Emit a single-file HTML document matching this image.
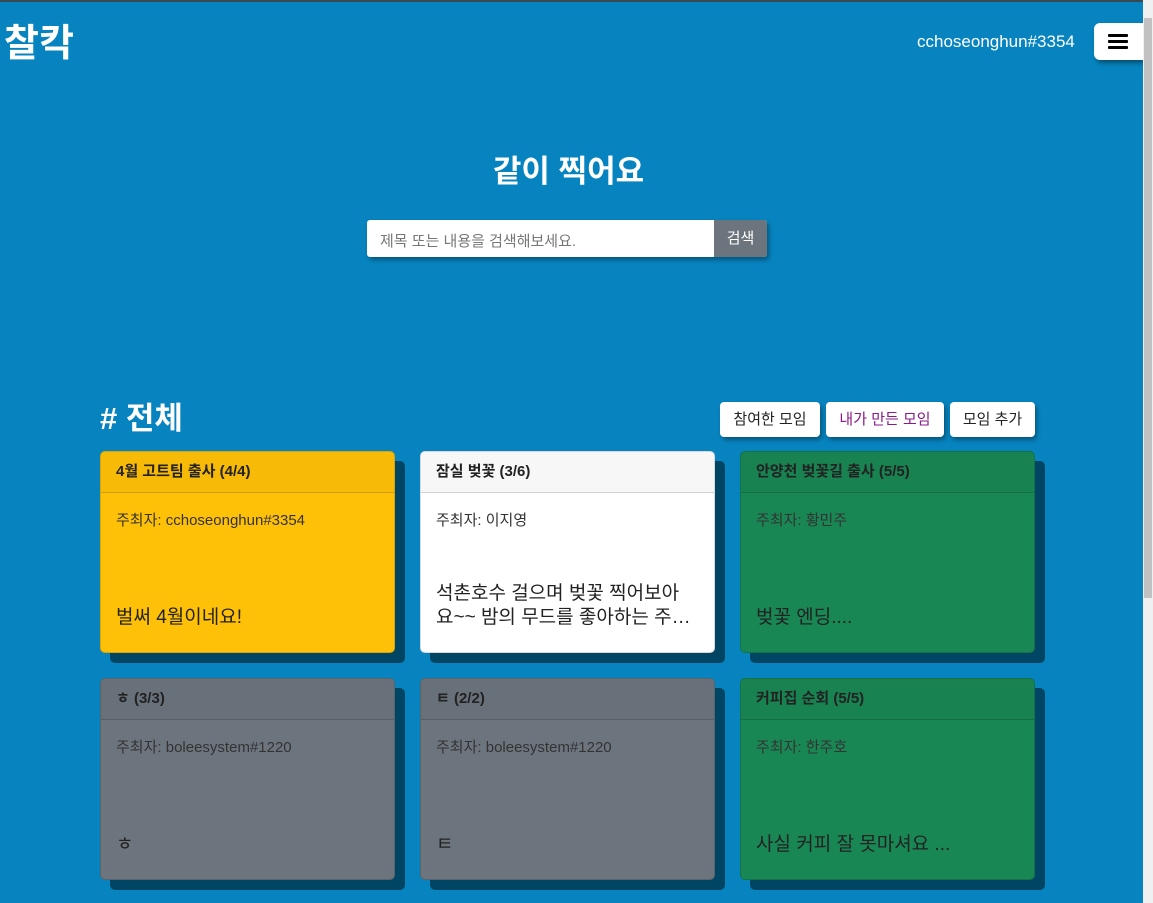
<!DOCTYPE html>
<html><head><meta charset="utf-8"><style>
*{box-sizing:border-box;margin:0;padding:0}
body{width:1153px;height:903px;overflow:hidden;background:#0784bf;font-family:"Liberation Sans","Noto Sans CJK KR",sans-serif;position:relative}
.top{position:absolute;left:0;top:0;width:1153px;height:2px;background:#3a4a55}
.sb{position:absolute;right:0;top:0;width:10px;height:903px;background:#f0f0f0}
.sb div{position:absolute;left:1px;top:18px;width:8px;height:580px;background:#c1c1c1}
.logo{position:absolute;left:4px;top:12px;color:#fff;font-size:38px;font-weight:bold}
.user{position:absolute;left:917px;top:32px;color:#fff;font-size:17px}
.menu{position:absolute;left:1094px;top:23px;width:49px;height:37px;background:#fff;border-radius:6px 0 0 6px;box-shadow:2px 3px 5px rgba(0,0,0,.4)}
.menu i{position:absolute;left:14px;width:20px;height:3px;background:#000;border-radius:1px}
h1{position:absolute;left:0;width:1137px;text-align:center;top:146px;color:#fff;font-size:31px}
.search{position:absolute;left:367px;top:220px;width:400px;height:37px;background:#fff;border-radius:3px;box-shadow:2px 3px 5px rgba(0,0,0,.35)}
.search span{position:absolute;left:13px;top:10px;font-size:15px;color:#777}
.search b{position:absolute;right:0;top:0;width:53px;height:37px;background:#6c757d;color:#fff;font-size:15px;font-weight:normal;text-align:center;line-height:37px;border-radius:0 3px 3px 0}
h2{position:absolute;left:100px;top:393px;color:#fff;font-size:31px}
.btn{position:absolute;top:402px;height:35px;background:#fff;border-radius:4px;font-size:15px;line-height:35px;text-align:center;box-shadow:2px 3px 5px rgba(0,0,0,.35);color:#222}
.card{position:absolute;width:295px;height:202px;border-radius:5px;box-shadow:10px 10px 0 #004563;border:1px solid rgba(0,0,0,.15);overflow:hidden}
.card .h{height:41px;border-bottom:1px solid rgba(0,0,0,.15);padding:8px 15px;font-size:15px;font-weight:bold;color:#222;background:rgba(0,0,0,.03)}
.card .o{position:absolute;left:15px;top:57px;font-size:15px;color:#333}
.card .t{position:absolute;left:15px;bottom:22px;right:18px;font-size:19px;color:#222;line-height:24px}
.y{background:#ffc107}.w{background:#fff}.g{background:#198754}.gr{background:#6c757d}
</style></head><body>
<div class="top"></div>
<div class="logo">찰칵</div>
<div class="user">cchoseonghun#3354</div>
<div class="menu"><i style="top:11px"></i><i style="top:17px"></i><i style="top:23px"></i></div>
<h1>같이 찍어요</h1>
<div class="search"><span>제목 또는 내용을 검색해보세요.</span><b>검색</b></div>
<h2># 전체</h2>
<div class="btn" style="left:720px;width:100px">참여한 모임</div>
<div class="btn" style="left:826px;width:118px;color:#8a1a8a">내가 만든 모임</div>
<div class="btn" style="left:950px;width:85px">모임 추가</div>

<div class="card y" style="left:100px;top:451px"><div class="h">4월 고트팀 출사 (4/4)</div><div class="o">주최자: cchoseonghun#3354</div><div class="t">벌써 4월이네요!</div></div>
<div class="card w" style="left:420px;top:451px"><div class="h" style="background:#f7f7f7">잠실 벚꽃 (3/6)</div><div class="o">주최자: 이지영</div><div class="t" style="height:48px;overflow:hidden">석촌호수 걸으며 벚꽃 찍어보아<br>요~~ 밤의 무드를 좋아하는 주…</div></div>
<div class="card g" style="left:740px;top:451px"><div class="h">안양천 벚꽃길 출사 (5/5)</div><div class="o">주최자: 황민주</div><div class="t">벚꽃 엔딩....</div></div>
<div class="card gr" style="left:100px;top:678px"><div class="h">ㅎ (3/3)</div><div class="o">주최자: boleesystem#1220</div><div class="t">ㅎ</div></div>
<div class="card gr" style="left:420px;top:678px"><div class="h">ㅌ (2/2)</div><div class="o">주최자: boleesystem#1220</div><div class="t">ㅌ</div></div>
<div class="card g" style="left:740px;top:678px"><div class="h">커피집 순회 (5/5)</div><div class="o">주최자: 한주호</div><div class="t">사실 커피 잘 못마셔요 ...</div></div>
<div class="sb"><div></div></div>
</body></html>
